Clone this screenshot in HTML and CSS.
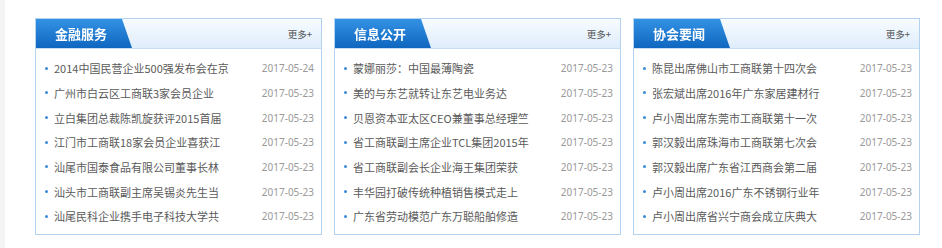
FILE: index.html
```html
<!DOCTYPE html>
<html>
<head>
	<title>news</title>
	<meta charset="utf-8">
	<link rel="stylesheet" href="styles.css">
</head>
<body>
<div class='side'></div>
<div class='wrap'>
	<div class='box'>
		<div class='hd'>
			<div class='tab'>金融服务</div>
			<a class='more' href='#'>更多+</a>
		</div>
		<ul class='list'>
			<li><a href='#'>2014中国民营企业500强发布会在京</a><span>2017-05-24</span></li>
			<li><a href='#'>广州市白云区工商联3家会员企业</a><span>2017-05-23</span></li>
			<li><a href='#'>立白集团总裁陈凯旋获评2015首届</a><span>2017-05-23</span></li>
			<li><a href='#'>江门市工商联18家会员企业喜获江</a><span>2017-05-23</span></li>
			<li><a href='#'>汕尾市国泰食品有限公司董事长林</a><span>2017-05-23</span></li>
			<li><a href='#'>汕头市工商联副主席吴锡炎先生当</a><span>2017-05-23</span></li>
			<li><a href='#'>汕尾民科企业携手电子科技大学共</a><span>2017-05-23</span></li>
		</ul>
	</div>
	<div class='box'>
		<div class='hd'>
			<div class='tab'>信息公开</div>
			<a class='more' href='#'>更多+</a>
		</div>
		<ul class='list'>
			<li><a href='#'>蒙娜丽莎：中国最薄陶瓷</a><span>2017-05-23</span></li>
			<li><a href='#'>美的与东艺就转让东艺电业务达</a><span>2017-05-23</span></li>
			<li><a href='#'>贝恩资本亚太区CEO兼董事总经理竺</a><span>2017-05-23</span></li>
			<li><a href='#'>省工商联副主席企业TCL集团2015年</a><span>2017-05-23</span></li>
			<li><a href='#'>省工商联副会长企业海王集团荣获</a><span>2017-05-23</span></li>
			<li><a href='#'>丰华园打破传统种植销售模式走上</a><span>2017-05-23</span></li>
			<li><a href='#'>广东省劳动模范广东万聪船舶修造</a><span>2017-05-23</span></li>
		</ul>
	</div>
	<div class='box'>
		<div class='hd'>
			<div class='tab'>协会要闻</div>
			<a class='more' href='#'>更多+</a>
		</div>
		<ul class='list'>
			<li><a href='#'>陈昆出席佛山市工商联第十四次会</a><span>2017-05-23</span></li>
			<li><a href='#'>张宏斌出席2016年广东家居建材行</a><span>2017-05-23</span></li>
			<li><a href='#'>卢小周出席东莞市工商联第十一次</a><span>2017-05-23</span></li>
			<li><a href='#'>郭汉毅出席珠海市工商联第七次会</a><span>2017-05-23</span></li>
			<li><a href='#'>郭汉毅出席广东省江西商会第二届</a><span>2017-05-23</span></li>
			<li><a href='#'>卢小周出席2016广东不锈钢行业年</a><span>2017-05-23</span></li>
			<li><a href='#'>卢小周出席省兴宁商会成立庆典大</a><span>2017-05-23</span></li>
		</ul>
	</div>
</div>
</body>
</html>
```

FILE: styles.css
```css
* {
	margin: 0;
	padding: 0;
	box-sizing: border-box;
}
body {
	display: flex;
	height: 248px;
	background: #fff;
	font-family: "Noto Sans CJK SC", sans-serif;
}
a {
	text-decoration: none;
}
ul {
	list-style: none;
}
.side {
	width: 5px;
	background: #f4f4f4;
}
.wrap {
	display: flex;
	gap: 12px;
	padding: 18px 0 0 30px;
	align-items: flex-start;
}
.box {
	width: 287px;
	border: 1px solid #b3d2f0;
}
.hd {
	display: flex;
	justify-content: space-between;
	align-items: center;
	height: 30px;
	border-bottom: 1px solid #c9def4;
	background: linear-gradient(to bottom, #f7fbff, #dfedfb);
}
.tab {
	position: relative;
	width: 96px;
	height: 29px;
	line-height: 29px;
	padding-left: 19px;
	color: #fff;
	font-size: 13px;
	font-weight: bold;
	background: linear-gradient(to bottom, #3392e4, #0f66bf);
	clip-path: polygon(0 0, 86px 0, 96px 100%, 0 100%);
	filter: drop-shadow(3px 0 1px #c4d3e2);
}
.more {
	margin-right: 9px;
	font-size: 9.5px;
	color: #555;
}
.list {
	padding: 7px 7px 5px 9px;
}
.list li {
	display: flex;
	align-items: center;
	height: 24.67px;
}
.list li::before {
	content: '';
	width: 3px;
	height: 3px;
	border-radius: 50%;
	background: #3b8ad8;
	margin-right: 6px;
	flex: none;
}
.list a {
	flex: 1;
	font-size: 11px;
	color: #5a5a5a;
	white-space: nowrap;
	overflow: hidden;
}
.list span {
	font-family: "Noto Sans", sans-serif;
	font-size: 10px;
	color: #999;
}
```
